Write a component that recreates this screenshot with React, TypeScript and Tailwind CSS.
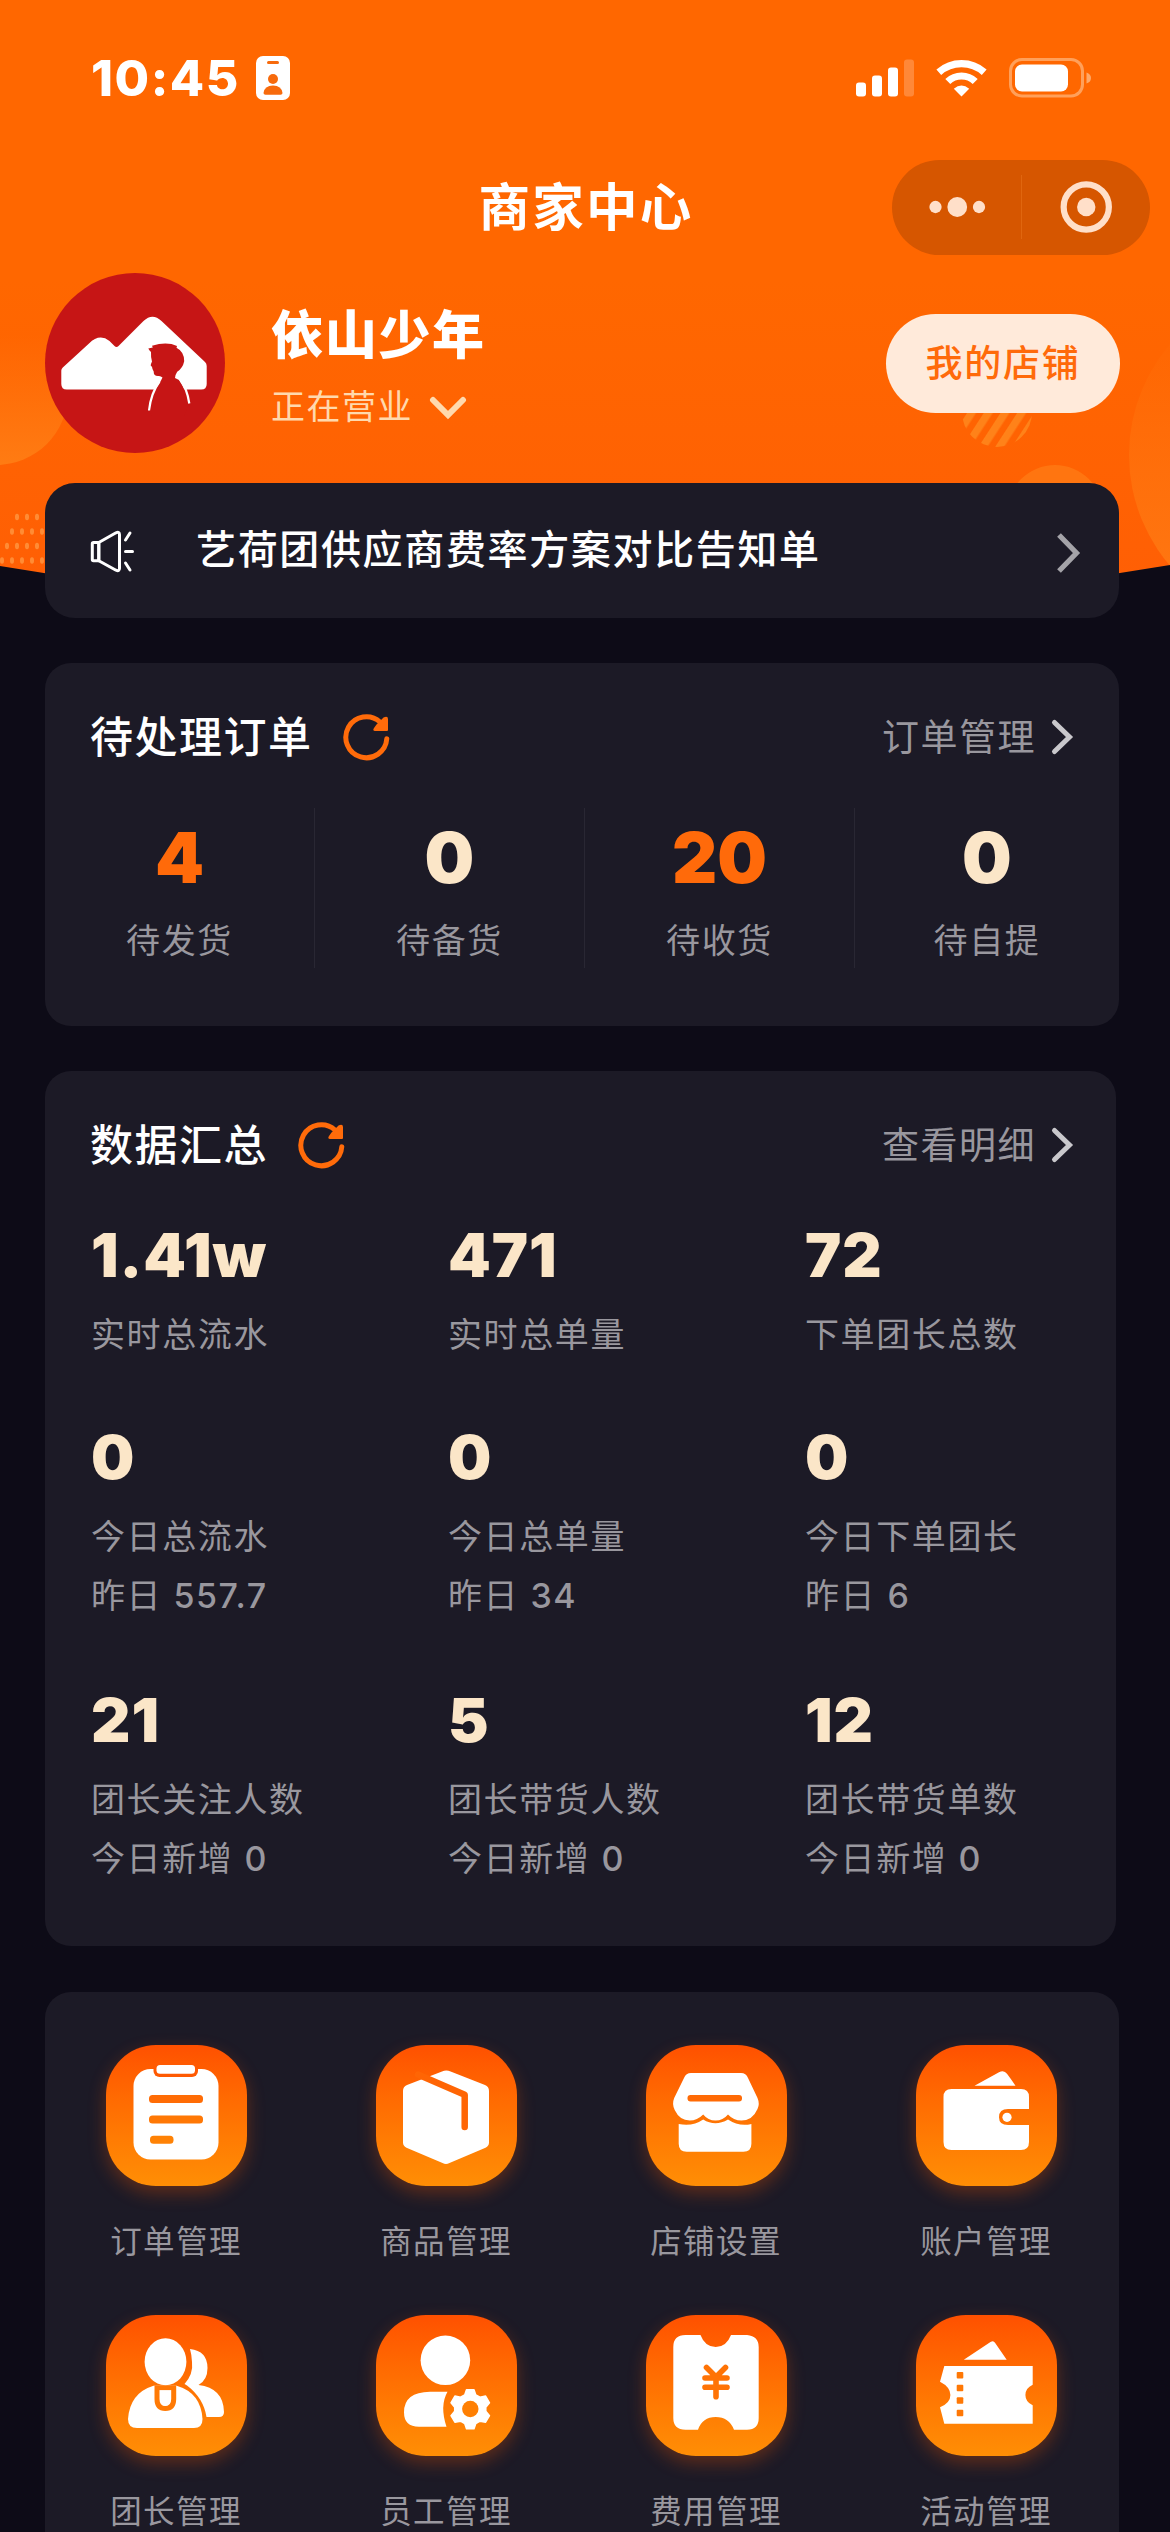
import type { ReactNode } from "react";

const PENDING = [
  { label: "待发货", value: "4", active: true },
  { label: "待备货", value: "0", active: false },
  { label: "待收货", value: "20", active: true },
  { label: "待自提", value: "0", active: false },
];

const STATS = [
  [
    { value: "1.41w", label: "实时总流水" },
    { value: "471", label: "实时总单量" },
    { value: "72", label: "下单团长总数" },
  ],
  [
    { value: "0", label: "今日总流水", sub: "昨日", count: "557.7" },
    { value: "0", label: "今日总单量", sub: "昨日", count: "34" },
    { value: "0", label: "今日下单团长", sub: "昨日", count: "6" },
  ],
  [
    { value: "21", label: "团长关注人数", sub: "今日新增", count: "0" },
    { value: "5", label: "团长带货人数", sub: "今日新增", count: "0" },
    { value: "12", label: "团长带货单数", sub: "今日新增", count: "0" },
  ],
];

const MENU: { label: string; icon: ReactNode }[] = [
  {
    label: "订单管理",
    icon: (
      <>
        <rect x="27.5" y="24" width="85" height="90.5" rx="17" fill="#fff" />
        <rect x="47.5" y="16" width="44.5" height="16" rx="6" fill="#ff5a02" />
        <rect x="50.5" y="20" width="38.5" height="8.8" rx="3.5" fill="#fff" />
        <rect x="43" y="50" width="54" height="8" rx="3.5" fill="#ff6c05" />
        <rect x="43" y="70.5" width="54" height="8" rx="3.5" fill="#ff7805" />
        <rect x="44" y="90.7" width="23.5" height="8" rx="3.5" fill="#ff8205" />
      </>
    ),
  },
  {
    label: "商品管理",
    icon: (
      <>
        <path
          d="M66 26.6q4.3-2.3 8.6 0L109 40q4 1.700 4 6v51.500q0 3.500-3.500 5.200L73.500 118q-3.500 2-7 0L30.500 102.700Q27 101 27 97.500V46q0-4.300 4-6z"
          fill="#fff"
        />
        <path d="M42 29.500L88.700 49.800V82" fill="none" stroke="#ff6504" strokeWidth="6.500" strokeLinecap="round" strokeLinejoin="round" />
      </>
    ),
  },
  {
    label: "店铺设置",
    icon: (
      <>
        <path
          d="M45 28h50q5 0 7 5l9.500 20q2.500 6 0 11-5 11.500-16 11.500-8 0-13.500-6-5 6-12.500 6t-12.300-6q-6 6-13.500 6-10 0-15-10.500-3-6-.5-12L38 33q2-5 7-5z"
          fill="#fff"
        />
        <path
          d="M32.700 79q14 2.800 24.500-4.500 12 7.500 24.800 0 11 7.500 23.400 4.500v19.700q0 8-8 8H40.700q-8 0-8-8z"
          fill="#fff"
        />
        <rect x="41.500" y="50" width="54.500" height="6.600" rx="3" fill="#ff6a05" />
      </>
    ),
  },
  {
    label: "账户管理",
    icon: (
      <>
        <path d="M58.500 40.700L83 27.200q5-2.700 8 1.500 4.500 6 8.500 12z" fill="#fff" />
        <path
          d="M35.500 44h69.500q8 0 8 8v12H92q-9 0-9 8.200 0 7.800 9 7.800h21v17q0 8-8 8H35.500q-8 0-8-8V52q0-8 8-8z"
          fill="#fff"
        />
        <circle cx="91" cy="72.300" r="4.600" fill="#fff" />
      </>
    ),
  },
  {
    label: "团长管理",
    icon: (
      <>
        <path d="M84 34q17.500 2 17.500 19 0 12-9 17 25 3 25.500 27 0 5-5 5h-12.500q-3-19-19.500-31.500-1-1-2.500-1.500 9-10 7.500-22-.5-8-2-13z" fill="#fff" />
        <ellipse cx="59.500" cy="46.800" rx="20.900" ry="23.500" fill="#fff" />
        <path d="M47.500 70.800h23.200Q95 78 96.500 104q0 9-8.500 9H31q-9 0-9-9 2-26 25.500-33.200z" fill="#fff" />
        <path d="M51 71v13q0 9.500 8.300 9.500T67.700 84V71" fill="none" stroke="#ff7a05" strokeWidth="5" />
        <path d="M49 70.600h21v4.500H49z" fill="#ff7805" />
        <rect x="55" y="76.700" width="8.200" height="14" rx="3.600" fill="#fff" />
      </>
    ),
  },
  {
    label: "员工管理",
    icon: (
      <>
        <circle cx="69.400" cy="45.300" r="24.800" fill="#fff" />
        <path d="M54 76.700h17.500q-8 14-1 35H43q-15 0-15-14.500Q28 77 54 76.700z" fill="#fff" />
        <path
          d="M90.500 74.800h7.500l1.800 5.200 4.200 2.200 5.600-1.200 3.900 6.800-3.700 4.400v4l3.700 4.500-3.900 6.500-5.600-1-4.200 2.300-1.800 5.200h-7.500l-1.800-5.200-4.200-2.300-5.600 1-3.900-6.500 3.700-4.500v-4L75 87.800l3.900-6.800 5.600 1.200 4.200-2.200z"
          fill="#fff"
          stroke="#fff"
          strokeWidth="1.500"
          strokeLinejoin="round"
        />
        <circle cx="94.300" cy="94" r="8.200" fill="#ff8003" />
      </>
    ),
  },
  {
    label: "费用管理",
    icon: (
      <>
        <path
          d="M39.500 20h15q4.500 12 15.200 12T85 20h16q11.700 1 11.700 12v71q0 11.700-11.700 11.700H88q-5-12.700-18.300-12.700T52 114.700H39.500q-12.200 0-12.200-11.700V32q0-12 12.200-12z"
          fill="#fff"
        />
        <path
          d="M60.500 52.500L70 62l9.500-9.500M59 63h22M59 72.200h22M70 63v18.800"
          fill="none"
          stroke="#ff7305"
          strokeWidth="5.600"
          strokeLinecap="round"
        />
      </>
    ),
  },
  {
    label: "活动管理",
    icon: (
      <>
        <path d="M47.800 44.700L74.500 27q3-2 4.500.8l11.700 16.900z" fill="#fff" />
        <path
          d="M28.300 51h88.400v18.700q-7.300 3.300-7.300 10.300t7.300 10.300v18.400H28.300L24 92.300q10.400-4.300 10.400-12.300T24 66.700z"
          fill="#fff"
        />
        <g fill="#ff7805">
          <rect x="40.700" y="57" width="6.600" height="6.600" rx="1" />
          <rect x="40.700" y="69.700" width="6.600" height="6.600" rx="1" />
          <rect x="40.700" y="82.200" width="6.600" height="6.600" rx="1" />
          <rect x="40.700" y="94.700" width="6.600" height="6.600" rx="1" />
        </g>
      </>
    ),
  },
];

function HeaderBackdrop() {
  return (
    <svg className="absolute inset-x-0 top-0" width="1170" height="620" viewBox="0 0 1170 620">
      <defs>
        <linearGradient id="sky" x1="0" y1="0" x2="0" y2="1">
          <stop offset="0.45" stopColor="#ff6700" />
          <stop offset="1" stopColor="#ff5e05" />
        </linearGradient>
        <linearGradient id="bubble" x1="0" y1="0" x2="0" y2="1">
          <stop offset="0.1" stopColor="#ff8418" stopOpacity="0" />
          <stop offset="1" stopColor="#ff8418" stopOpacity="0.75" />
        </linearGradient>
        <pattern id="stripes" width="14" height="14" patternUnits="userSpaceOnUse" patternTransform="rotate(33)">
          <rect width="7.500" height="14" fill="#ff8219" />
        </pattern>
        <pattern id="dots" x="2" y="510" width="10" height="29" patternUnits="userSpaceOnUse">
          <ellipse cx="5" cy="7" rx="2" ry="3.200" fill="#ff8c35" />
          <ellipse cx="0" cy="21.500" rx="2" ry="3.200" fill="#ff8c35" />
          <ellipse cx="10" cy="21.500" rx="2" ry="3.200" fill="#ff8c35" />
        </pattern>
        <clipPath id="dome">
          <path d="M0 0H1170V565Q585 665 0 566z" />
        </clipPath>
      </defs>
      <g clipPath="url(#dome)">
        <rect width="1170" height="620" fill="url(#sky)" />
        <circle cx="-4" cy="393" r="72" fill="url(#bubble)" />
        <circle cx="1299" cy="455" r="170" fill="url(#bubble)" />
        <circle cx="997" cy="412" r="35" fill="url(#stripes)" />
        <circle cx="1055" cy="513" r="48" fill="#ff7510" />
        <path d="M12 510H45V568H0V535H6z" fill="url(#dots)" />
      </g>
    </svg>
  );
}

function StatusBar() {
  return (
    <div className="flex h-[156px] items-center justify-between pl-[91px] pr-[78px]">
      <div className="flex items-center gap-[16px]">
        <span className="text-[50px] font-extrabold leading-none tracking-[1.500px]">10:45</span>
        <svg width="34" height="44" viewBox="0 0 34 44">
          <rect width="34" height="44" rx="7" fill="#fff" />
          <rect x="11" y="5" width="12" height="3" rx="1.500" fill="#f76a0c" />
          <circle cx="17" cy="23" r="5" fill="#f76a0c" />
          <path d="M7.500 37q1-7.500 9.500-7.500t9.500 7.500q0 1.700-2 1.700h-15q-2 0-2-1.700z" fill="#f76a0c" />
        </svg>
      </div>
      <div className="flex items-center gap-[22px]">
        <svg width="58" height="38" viewBox="0 0 58 38" fill="#fff">
          <rect y="23.500" width="10" height="14" rx="3" />
          <rect x="16" y="16.500" width="10" height="21" rx="3" />
          <rect x="32" y="8.500" width="10" height="29" rx="3" />
          <rect x="48" y="0.500" width="10" height="37" rx="3" opacity="0.22" />
        </svg>
        <svg width="51" height="38" viewBox="0 0 51 38" fill="none" stroke="#fff" strokeWidth="7.200">
          <path d="M2.800 13.200Q12.500 4.600 25.500 4.600T48.200 13.200" />
          <path d="M11.800 22.500Q17.500 17 25.500 17T39.200 22.500" />
          <path d="M25.500 37.500L17.800 29.800Q25.500 23 33.200 29.800z" fill="#fff" stroke="none" />
        </svg>
        <svg width="83" height="40" viewBox="0 0 83 40">
          <rect x="1.500" y="1.500" width="72" height="36.500" rx="11.500" fill="none" stroke="#ffa05a" strokeWidth="3" />
          <rect x="6" y="6.500" width="53" height="27" rx="7" fill="#fff" />
          <path d="M77.500 14.500q4.500 1.500 4.500 5.500t-4.500 5.500z" fill="#ffa968" />
        </svg>
      </div>
    </div>
  );
}

function TitleBar() {
  return (
    <div className="mt-[3px] flex h-[96px] items-center pl-[22px] pr-[20px]">
      <div className="flex-1" />
      <h1 className="pt-[2px] text-[51.5px] font-bold leading-none tracking-[2.2px]">商家中心</h1>
      <div className="flex flex-1 justify-end">
        <div className="flex h-[95px] w-[258px] items-center rounded-full bg-[#d65600]">
          <svg className="flex-1" height="60" viewBox="0 0 130 60" fill="#ffdfc9">
            <circle cx="44" cy="30" r="6.200" />
            <circle cx="66" cy="30" r="10" />
            <circle cx="88" cy="30" r="6.200" />
          </svg>
          <div className="h-[64px] w-px bg-[#e0660f]" />
          <svg className="flex-1" height="60" viewBox="0 0 128 60">
            <circle cx="64" cy="30" r="22.600" fill="none" stroke="#ffdfc9" strokeWidth="6.200" />
            <circle cx="64" cy="30" r="9.200" fill="#ffdfc9" />
          </svg>
        </div>
      </div>
    </div>
  );
}

function Avatar() {
  return (
    <svg width="180" height="180" viewBox="0 0 180 180">
      <circle cx="90" cy="90" r="90" fill="#c61515" />
      <path
        d="M16.300 97.500q0-1.500 1.500-3L44 70.500q10.500-10.500 20.500-2.500l5 5q2 1.800 4 0L98.500 48q9-8.500 18 0L160 89q1.700 1.600 1.700 4v18q0 5.500-5.500 5.500H21.800q-5.500 0-5.500-5.500z"
        fill="#fff"
      />
      <path
        d="M103.300 75.500l4.500-1-.8-1.800q15-4.500 25 .3l-.5 1.800q7.800 4 7.700 13.500-1.500 7-7 10.500-2.500 4-2.200 6.200l4 2q8 12 10 24l-5 12h-32l-3-6q2-16 11.500-28.500l2-4q-2-2-4.500-1.500-4.500 0-4.300-4.500l-1.200-2.500q0-2.500-1.800-3.500.3-2 1.300-4-1.300-4.500-1-9.500-1.500-1.500-2.700-3.500z"
        fill="#c61515"
      />
      <path d="M114.500 108.500Q106 120 104 137.500M134.500 105.500Q142 115 144.300 130.500" fill="none" stroke="#fff" strokeWidth="2.200" />
    </svg>
  );
}

function ProfileRow() {
  return (
    <div className="mt-[18px] flex h-[180px] items-center pl-[45px] pr-[50px]">
      <Avatar />
      <div className="ml-[46px] flex-1 pt-[10px]">
        <h2 className="text-[52px] font-extrabold leading-[60px] tracking-[1.7px]">依山少年</h2>
        <div className="mt-[17px] flex items-center gap-[16px] text-[#ffd9ad]">
          <span className="text-[34px] leading-[48px] tracking-[1.500px]">正在营业</span>
          <svg className="mt-[2px]" width="38" height="25" viewBox="0 0 38 25" fill="none" stroke="currentColor" strokeWidth="6" strokeLinecap="round">
            <path d="M4 5l15 15L34 5" />
          </svg>
        </div>
      </div>
      <button className="h-[99px] w-[234px] rounded-full bg-[#ffeada] text-[37px] font-medium leading-none tracking-[1.700px] text-[#ff6a0a]">
        我的店铺
      </button>
    </div>
  );
}

function NoticeBar() {
  return (
    <div className="ml-[45px] mt-[30px] flex h-[135px] w-[1074px] items-center rounded-[30px] bg-[#1c1a26] pl-[45px] pr-[38px]">
      <svg width="44" height="44" viewBox="0 0 44 44" fill="none" stroke="#fff" strokeWidth="3" strokeLinecap="round" strokeLinejoin="round">
        <path d="M3.500 13.500h5.300v18.300H3.500q-1.200 0-1.200-1.200V14.700q0-1.200 1.200-1.200z" />
        <path d="M8.800 13.500L26 3.800q3.500-1.500 3.500 2v33.400q0 3.500-3.500 2L8.800 31.800z" />
        <path d="M35.500 11l4.500-7M35.500 22.500h7M35.500 34l4.500 7" />
      </svg>
      <span className="mb-[2px] ml-[62px] flex-1 text-[40px] font-medium leading-none tracking-[1.650px]">
        艺荷团供应商费率方案对比告知单
      </span>
      <svg className="mt-[4px]" width="26" height="42" viewBox="0 0 26 42" fill="none" stroke="#a4a3a8" strokeWidth="5.200">
        <path d="M4 3l17.500 18L4 39" />
      </svg>
    </div>
  );
}

function SectionHeader({ title, link }: { title: string; link: string }) {
  return (
    <div className="flex h-[48px] items-center">
      <h3 className="text-[43px] font-medium leading-none tracking-[1.500px]">{title}</h3>
      <svg className="ml-[30px]" width="47" height="47" viewBox="0 0 47 47">
        <path d="M43.800 24.700A20.500 20.500 0 1 1 37 8" fill="none" stroke="#ff6b0a" strokeWidth="5" strokeLinecap="round" />
        <path
          d="M40.500 3.500q4.500-2 4.500 1.500v11q0 1-1 1H32q-2.800-.5-1-3l2.500-3.500z"
          fill="#ff6b0a"
        />
      </svg>
      <span className="ml-auto text-[37px] leading-none tracking-[1.500px] text-[#99979e]">{link}</span>
      <svg className="ml-[14px]" width="26" height="38" viewBox="0 0 26 38" fill="none" stroke="#c9c8cc" strokeWidth="5" strokeLinecap="round">
        <path d="M4.500 4.500L19.500 19 4.500 33.500" />
      </svg>
    </div>
  );
}

function PendingOrders() {
  return (
    <section className="ml-[45px] mt-[45px] h-[363px] w-[1074px] rounded-[26px] bg-[#1c1a26] pt-[50px]">
      <div className="pl-[45px] pr-[43px]">
        <SectionHeader title="待处理订单" link="订单管理" />
      </div>
      <div className="mt-[47px] grid grid-cols-[270px_270px_270px_264px]">
        {PENDING.map((item) => (
          <div
            key={item.label}
            className="flex h-[160px] flex-col items-center border-r border-[#292733] last:border-r-0"
          >
            <span
              className={`mt-[16px] text-[70px] font-black leading-[68px] ${
                item.active ? "text-[#ff6a0a]" : "text-[#fbe6c8]"
              }`}
            >
              {item.value}
            </span>
            <span className="mt-[25px] text-[34px] leading-[48px] tracking-[1.600px] text-[#99979e]">
              {item.label}
            </span>
          </div>
        ))}
      </div>
    </section>
  );
}

function DataSummary() {
  return (
    <section className="ml-[45px] mt-[45px] h-[875px] w-[1071px] rounded-[26px] bg-[#1c1a26] pt-[50px]">
      <div className="pl-[45px] pr-[40px]">
        <SectionHeader title="数据汇总" link="查看明细" />
      </div>
      <div className="mt-[56px] flex flex-col gap-[62px] pl-[46px]">
        {STATS.map((row, i) => (
          <div key={i} className="grid grid-cols-[357px_357px_1fr] last:mt-[2px]">
            {row.map((stat) => (
              <div key={stat.label}>
                <div className="text-[61px] font-black leading-[60px] tracking-[1px] text-[#fbe6c8]">{stat.value}</div>
                <div className="mt-[20px] text-[34px] leading-[59.500px] tracking-[1.600px] text-[#99979e]">
                  <p>{stat.label}</p>
                  {stat.sub && (
                    <p>
                      {stat.sub} <span className="font-medium">{stat.count}</span>
                    </p>
                  )}
                </div>
              </div>
            ))}
          </div>
        ))}
      </div>
    </section>
  );
}

function MenuGrid() {
  return (
    <section className="ml-[45px] mt-[46px] w-[1074px] rounded-[26px] bg-[#1c1a26] pb-[60px] pt-[53px]">
      <div className="grid grid-cols-[repeat(4,270px)] gap-y-[43px]">
        {MENU.map((item) => (
          <div key={item.label} className="flex h-[227px] flex-col items-center pr-[8px]">
            <div className="h-[141px] w-[141px] rounded-[50px] bg-linear-to-b from-[#ff5000] to-[#ff8e05] shadow-[0_7px_18px_rgba(255,90,0,0.3)]">
              <svg width="141" height="141" viewBox="0 0 141 141">
                {item.icon}
              </svg>
            </div>
            <span className="mt-[32px] text-[31.500px] leading-[48px] tracking-[1.400px] text-[#99979e]">
              {item.label}
            </span>
          </div>
        ))}
      </div>
    </section>
  );
}

export default function App() {
  return (
    <main className="relative h-[2532px] w-[1170px] overflow-hidden bg-[#0d0b17] font-[Inter,'Noto_Sans_CJK_SC',sans-serif] text-white">
      <HeaderBackdrop />
      <div className="relative">
        <StatusBar />
        <TitleBar />
        <ProfileRow />
        <NoticeBar />
        <PendingOrders />
        <DataSummary />
        <MenuGrid />
      </div>
    </main>
  );
}
